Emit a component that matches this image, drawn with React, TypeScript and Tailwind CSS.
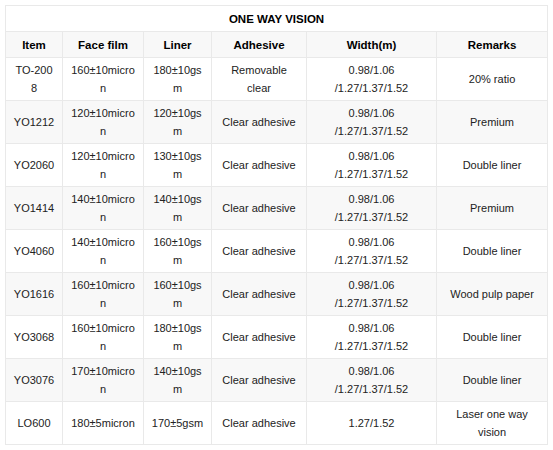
const W = '0.98/1.06\n/1.27/1.37/1.52';

const rows = [
  ['TO-200\n8', '160±10micro\nn', '180±10gs\nm', 'Removable\nclear', W, '20% ratio'],
  ['YO1212', '120±10micro\nn', '120±10gs\nm', 'Clear adhesive', W, 'Premium'],
  ['YO2060', '120±10micro\nn', '130±10gs\nm', 'Clear adhesive', W, 'Double liner'],
  ['YO1414', '140±10micro\nn', '140±10gs\nm', 'Clear adhesive', W, 'Premium'],
  ['YO4060', '140±10micro\nn', '160±10gs\nm', 'Clear adhesive', W, 'Double liner'],
  ['YO1616', '160±10micro\nn', '160±10gs\nm', 'Clear adhesive', W, 'Wood pulp paper'],
  ['YO3068', '160±10micro\nn', '180±10gs\nm', 'Clear adhesive', W, 'Double liner'],
  ['YO3076', '170±10micro\nn', '140±10gs\nm', 'Clear adhesive', W, 'Double liner'],
  ['LO600', '180±5micron', '170±5gsm', 'Clear adhesive', '1.27/1.52', 'Laser one way\nvision'],
];

const headers = ['Item', 'Face film', 'Liner', 'Adhesive', 'Width(m)', 'Remarks'];

export default function App() {
  return (
    <div className="bg-white p-[5px] text-[#222] font-['Liberation_Sans',Arial,sans-serif]">
      <table className="table-fixed border-collapse w-[542px] text-[11px] leading-[18px]">
        <colgroup>
          <col className="w-[57px]" />
          <col className="w-[81px]" />
          <col className="w-[68px]" />
          <col className="w-[95px]" />
          <col className="w-[130px]" />
          <col className="w-[111px]" />
        </colgroup>
        <thead>
          <tr className="h-[26px] bg-white">
            <th colSpan={6} className="border border-[#e9e9e9] font-extrabold text-black text-[11.5px]">
              ONE WAY VISION
            </th>
          </tr>
          <tr className="h-[26px] bg-[#f8f8f8]">
            {headers.map((h) => (
              <th key={h} className="border border-[#e9e9e9] font-extrabold text-black text-[11.5px]">
                {h}
              </th>
            ))}
          </tr>
        </thead>
        <tbody>
          {rows.map((r, i) => (
            <tr key={r[0]} className={`h-[43px] ${i % 2 === 1 ? 'bg-[#f8f8f8]' : 'bg-white'}`}>
              {r.map((c, j) => (
                <td key={j} className="border border-[#e9e9e9] px-[4px] text-center align-middle whitespace-pre-line">
                  {c}
                </td>
              ))}
            </tr>
          ))}
        </tbody>
      </table>
    </div>
  );
}
